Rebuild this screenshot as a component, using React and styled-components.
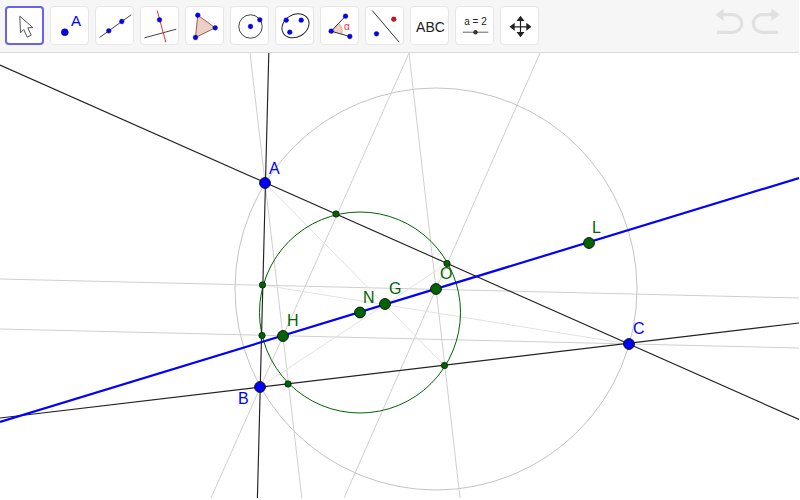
import React from "react";
import styled, { createGlobalStyle } from "styled-components";

const Global = createGlobalStyle`
  html, body { margin: 0; padding: 0; background: #fff; }
  #root { width: 800px; height: 500px; overflow: hidden; }
`;

const Shell = styled.div`
  width: 799px;
  height: 498px;
  display: flex;
  flex-direction: column;
  font-family: "Liberation Sans", Arial, sans-serif;
  background: #fff;
  overflow: hidden;
`;

const Toolbar = styled.div`
  flex: none;
  height: 53px;
  box-sizing: border-box;
  display: flex;
  align-items: flex-start;
  gap: 6px;
  padding: 6px 0 0 5px;
  background: #f6f6f6;
  border-bottom: 1px solid #dcdcdc;
`;

const Tool = styled.div`
  flex: none;
  box-sizing: border-box;
  width: 39px;
  height: 39px;
  background: #fff;
  border: ${(p) => (p.$active ? "2px solid #6a62e8" : "1px solid #e6e6e6")};
  border-radius: 4px;
  display: flex;
  align-items: center;
  justify-content: center;
`;

const ToolIcon = styled.svg`
  width: 40px;
  height: 40px;
  display: block;
  flex: none;
`;

const IconText = styled.text`
  font-family: "Liberation Sans", Arial, sans-serif;
  font-size: ${(p) => p.$size}px;
  fill: ${(p) => p.$color};
`;

const History = styled.div`
  margin-left: auto;
  display: flex;
  gap: 5px;
  padding: 2px 18px 0 0;
`;

const HistoryIcon = styled.svg`
  width: 31px;
  height: 27px;
  display: block;
  flex: none;
`;

const Canvas = styled.svg`
  flex: 1;
  width: 100%;
  min-height: 0;
  display: block;
`;

const Label = styled.text`
  font-family: "Liberation Sans", Arial, sans-serif;
  font-size: 16px;
  fill: ${(p) => p.$color};
`;

const BLUE = "#0000ff";
const GREEN = "#006400";
const Dot = ({ x, y, r = 2.4, c = BLUE }) => <circle cx={x} cy={y} r={r} fill={c} stroke="#22224a" strokeWidth="0.4" />;

const icons = [
  <path key="m" d="M14.3 9.7 L15 26.3 L18.3 23 L21.7 30.7 L25.7 28.7 L22.3 21.3 L27.3 21 Z" fill="#fff" stroke="#555" strokeWidth="1" />,
  <g key="p">
    <circle cx="14.3" cy="25.7" r="3.5" fill={BLUE} stroke="#111" strokeWidth="0.5" />
    <IconText x="20.5" y="19.4" $size={15} $color={BLUE}>A</IconText>
  </g>,
  <g key="l">
    <line x1="4" y1="31" x2="35.7" y2="8.3" stroke="#444" strokeWidth="1" />
    <Dot x={13.3} y={24.3} />
    <Dot x={26.3} y={15} />
  </g>,
  <g key="pp">
    <line x1="4" y1="31.3" x2="35.7" y2="22.7" stroke="#444" strokeWidth="1" />
    <line x1="16.7" y1="4" x2="25.3" y2="35.7" stroke="#e53030" strokeWidth="1" />
    <Dot x={19} y={13.3} />
  </g>,
  <g key="t">
    <path d="M12.3 8.7 L29.7 21.3 L10 31 Z" fill="#eccfc6" stroke="#a05a48" strokeWidth="1" />
    <Dot x={12.3} y={8.7} />
    <Dot x={29.7} y={21.3} />
    <Dot x={10} y={31} />
  </g>,
  <g key="c">
    <circle cx="20" cy="20" r="11.7" fill="none" stroke="#444" strokeWidth="1" />
    <Dot x={20} y={20} />
    <Dot x={29.3} y={13.3} />
  </g>,
  <g key="e">
    <ellipse cx="20" cy="19.3" rx="14.2" ry="11.2" transform="rotate(-30 20 19.3)" fill="none" stroke="#222" strokeWidth="1" />
    <Dot x={10.7} y={13.7} />
    <Dot x={25.7} y={13.7} />
    <Dot x={14.3} y={25.7} />
  </g>,
  <g key="a">
    <path d="M10.7 24.7 L18 16.7 A 11 11 0 0 1 21.3 27.7 Z" fill="#f0cfc6" />
    <path d="M18 16.7 A 11 11 0 0 1 21.3 27.7" fill="none" stroke="#e08a7a" strokeWidth="0.7" />
    <path d="M25 9.7 L10.7 24.7 L29.3 30" fill="none" stroke="#333" strokeWidth="1" />
    <IconText x="23.5" y="23" $size={10} $color="#e33">α</IconText>
    <Dot x={10.7} y={24.7} />
    <Dot x={25} y={9.7} />
    <Dot x={29.3} y={30} />
  </g>,
  <g key="r">
    <line x1="6.7" y1="4" x2="33.7" y2="35.7" stroke="#333" strokeWidth="1" />
    <Dot x={28.3} y={12.7} c="#e01010" />
    <Dot x={11} y={27.3} />
  </g>,
  <IconText key="abc" x="20" y="25" $size={14} $color="#222" textAnchor="middle">ABC</IconText>,
  <g key="s">
    <IconText x="20" y="18.7" $size={10} $color="#222" textAnchor="middle">a = 2</IconText>
    <line x1="7.3" y1="25.7" x2="32.7" y2="25.7" stroke="#666" strokeWidth="1" />
    <circle cx="20" cy="25.7" r="2.2" fill="#333" />
  </g>,
  <path key="mv" d="M20 9.3 L24 14.5 H20.6 V19.7 H25.8 V16.3 L31 20.3 L25.8 24.3 V20.9 H20.6 V25.5 H24 L20 30.7 L16 25.5 H19.4 V20.9 H14.2 V24.3 L9 20.3 L14.2 16.3 V19.7 H19.4 V14.5 H16 Z" fill="#222" />,
];

const thin = [
  [250, 53, 301.8, 498],
  [409, 53, 211, 498],
  [0, 329, 799, 348],
  [540, 53, 344, 498],
  [0, 279, 799, 298],
  [409, 53, 460, 498],
];
const medians = [
  [265, 183, 444.5, 365.5],
  [260, 387, 447, 263.5],
  [629, 344, 262.5, 285],
];
const black = [
  [268.8, 53, 257.4, 498],
  [0, 65, 799, 419.5],
  [0, 418, 799, 323],
];
const corners = [[265, 183], [260, 387], [629, 344]];
const feet = [[336, 214], [447, 263.5], [262.5, 285], [262, 335.5], [444.5, 365.5], [288, 384]];
const centers = [[283, 336], [360, 312.5], [385, 304], [436, 289], [589, 243]];
const labels = [
  ["A", BLUE, 269, 174],
  ["B", BLUE, 238, 404],
  ["C", BLUE, 633, 334],
  ["H", GREEN, 287, 326],
  ["N", GREEN, 363, 303],
  ["G", GREEN, 389, 294],
  ["O", GREEN, 440, 279],
  ["L", GREEN, 592, 233],
];

export default function App() {
  return (
    <Shell>
      <Global />
      <Toolbar>
        {icons.map((ic, i) => (
          <Tool key={i} $active={i === 0}>
            <ToolIcon viewBox="-0.5 -0.5 40 40">{ic}</ToolIcon>
          </Tool>
        ))}
        <History>
          <HistoryIcon viewBox="0 0 31 27" fill="none" stroke="#e0e0e0">
            <path d="M1.7 6.7 L9.3 1 V12.4 Z" fill="#e0e0e0" strokeWidth="0.6" />
            <path d="M9 6.7 H18.9 a8.8 8.8 0 0 1 0 17.6 H3" strokeWidth="3.2" />
          </HistoryIcon>
          <HistoryIcon viewBox="0 0 31 27" fill="none" stroke="#e0e0e0">
            <path d="M29.3 6.7 L21.7 1 V12.4 Z" fill="#e0e0e0" strokeWidth="0.6" />
            <path d="M22 6.7 H12.1 a8.8 8.8 0 0 0 0 17.6 H28" strokeWidth="3.2" />
          </HistoryIcon>
        </History>
      </Toolbar>
      <Canvas viewBox="0 53 799 445">
        <circle cx="436" cy="289" r="201" fill="none" stroke="#c4c4c4" strokeWidth="1" />
        {thin.map((l, i) => (
          <line key={i} x1={l[0]} y1={l[1]} x2={l[2]} y2={l[3]} stroke="#cfcfcf" strokeWidth="1" />
        ))}
        {medians.map((l, i) => (
          <line key={i} x1={l[0]} y1={l[1]} x2={l[2]} y2={l[3]} stroke="#e2e2e2" strokeWidth="1" />
        ))}
        <circle cx="360" cy="312.5" r="100.5" fill="none" stroke={GREEN} strokeWidth="1" />
        {black.map((l, i) => (
          <line key={i} x1={l[0]} y1={l[1]} x2={l[2]} y2={l[3]} stroke="#222" strokeWidth="1.15" />
        ))}
        <line x1="0" y1="422" x2="799" y2="178" stroke={BLUE} strokeWidth="2.2" />
        {feet.map((p, i) => (
          <circle key={i} cx={p[0]} cy={p[1]} r="3.2" fill={GREEN} stroke="#111" strokeWidth="0.7" />
        ))}
        {centers.map((p, i) => (
          <circle key={i} cx={p[0]} cy={p[1]} r="5.4" fill={GREEN} stroke="#111" strokeWidth="1" />
        ))}
        {corners.map((p, i) => (
          <circle key={i} cx={p[0]} cy={p[1]} r="5.4" fill={BLUE} stroke="#111" strokeWidth="1" />
        ))}
        {labels.map(([t, c, x, y]) => (
          <Label key={t} $color={c} x={x} y={y}>{t}</Label>
        ))}
      </Canvas>
    </Shell>
  );
}
